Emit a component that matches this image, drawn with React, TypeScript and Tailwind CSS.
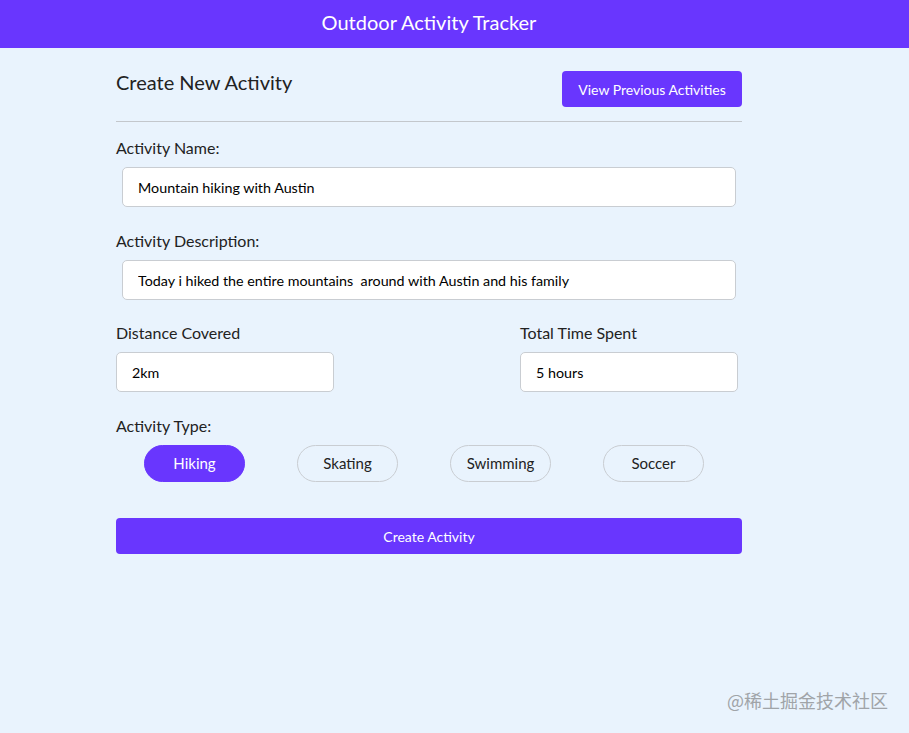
const TYPES = ['Hiking', 'Skating', 'Swimming', 'Soccer'];

const font = { fontFamily: 'Lato, "Noto Sans", sans-serif' };

function Field({ label, value, inset }: { label: string; value: string; inset?: boolean }) {
  return (
    <div className="flex flex-col">
      <label className="text-[16px] leading-6 text-[#222]">{label}</label>
      <input
        readOnly
        value={value}
        className={
          'mt-[7px] h-10 rounded-[5px] border border-[#c9cdd2] bg-white px-[15px] text-[14.3px] text-black outline-none ' +
          (inset ? 'mx-[6px]' : '')
        }
      />
    </div>
  );
}

export default function App() {
  const selected = 'Hiking';

  return (
    <div className="relative min-h-[733px] bg-[#e9f3fd]" style={font}>
      <header className="h-12 bg-[#6936fe]">
        <div className="flex h-12 w-[858px] items-center justify-center pb-[5px]">
          <h1 className="text-[20px] text-white">Outdoor Activity Tracker</h1>
        </div>
      </header>

      <div className="w-[858px]">
        <main className="mx-auto w-[626px] pt-[23px]">
          <div className="flex items-start justify-between">
            <h2 className="text-[20px] leading-[22px] text-[#222]">Create New Activity</h2>
            <button className="h-9 w-[180px] rounded-[4px] bg-[#6936fe] text-[14px] text-white">
              View Previous Activities
            </button>
          </div>
          <hr className="mt-[14px] border-t border-[#c3c7cc]" />

          <div className="mt-[14px] flex flex-col">
            <Field label="Activity Name:" value="Mountain hiking with Austin" inset />
            <div className="mt-[22px]">
              <Field
                label="Activity Description:"
                value="Today i hiked the entire mountains  around with Austin and his family"
                inset
              />
            </div>
            <div className="mt-[21px] flex justify-between">
              <div className="w-[218px]">
                <Field label="Distance Covered" value="2km" />
              </div>
              <div className="mr-1 w-[218px]">
                <Field label="Total Time Spent" value="5 hours" />
              </div>
            </div>
            <div className="mt-[22px] flex flex-col">
              <span className="text-[16px] leading-6 text-[#222]">Activity Type:</span>
              <div className="mt-[7px] flex gap-[52px] pl-[28px]">
                {TYPES.map((t) => (
                  <button
                    key={t}
                    className={
                      t === selected
                        ? 'h-[37px] w-[101px] rounded-full border border-[#6936fe] bg-[#6936fe] text-[15px] text-white'
                        : 'h-[37px] w-[101px] rounded-full border border-[#c9cdd2] text-[15px] text-[#222]'
                    }
                  >
                    {t}
                  </button>
                ))}
              </div>
            </div>
          </div>

          <button className="mt-[36px] h-9 w-full rounded-[4px] bg-[#6936fe] text-[14px] text-white">
            Create Activity
          </button>
        </main>
      </div>

      <div
        className="absolute bottom-[19px] right-[21px] text-[18px] text-[#a0a4a8]"
        style={{ fontFamily: '"Noto Sans CJK SC", sans-serif' }}
      >
        @稀土掘金技术社区
      </div>
    </div>
  );
}
